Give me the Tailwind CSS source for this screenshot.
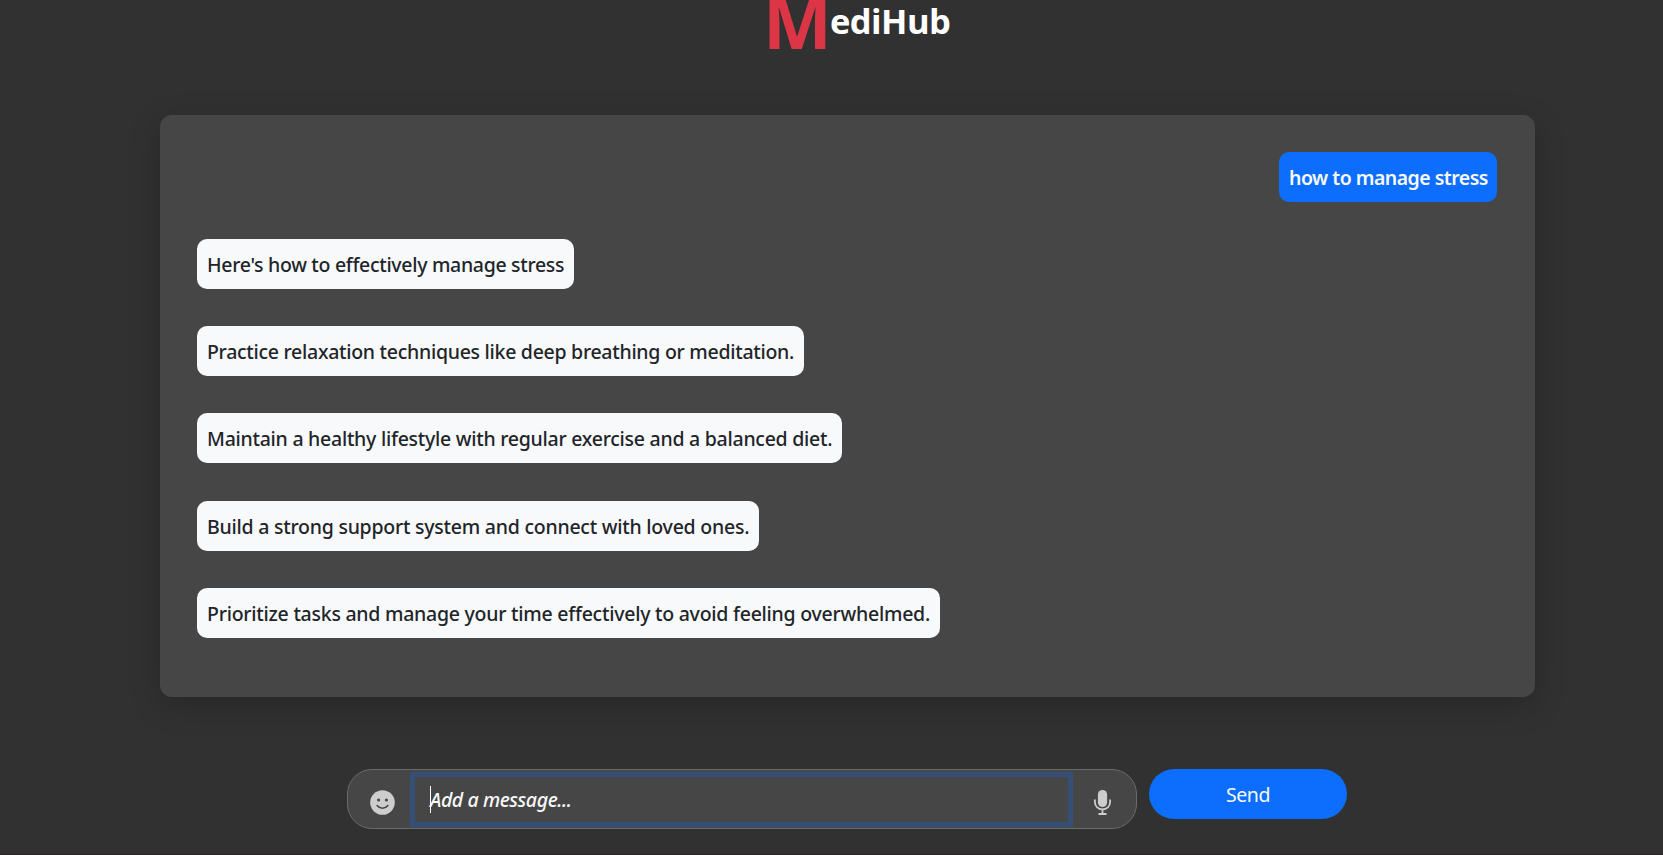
<!DOCTYPE html>
<html lang="en">
<head>
<meta charset="utf-8">
<title>MediHub</title>
<script src="https://cdn.jsdelivr.net/npm/@tailwindcss/browser@4"></script>
</head>
<body class="h-[855px] overflow-hidden bg-[#313131] font-['Noto_Sans',sans-serif] text-[19.5px] border-b border-[#2b2429] flex flex-col">
  <header class="flex h-10 shrink-0 pl-[763px] font-['Open_Sans',sans-serif] font-bold">
    <h1 class="flex whitespace-nowrap text-white">
      <span class="w-[67px] text-[73px] leading-[42px] text-[#dc3545]">M</span>
      <span class="text-[34.5px] leading-[42px] tracking-[-0.55px]">ediHub</span>
    </h1>
  </header>

  <main class="mt-[75px] ml-[160px] h-[582px] w-[1375px] shrink-0 rounded-xl bg-[#464646] px-[37px] pt-[37px] shadow-[0_8px_32px_rgba(0,0,0,0.2)] flex flex-col whitespace-nowrap leading-[52px] font-medium text-[#212529]">
    <p class="h-[50px] w-[218px] self-end mr-[1px] rounded-[10px] bg-[#0d6efd] pl-[10px] font-semibold tracking-[-0.52px] text-[#f8f9fa]">how to manage stress</p>
    <p class="mt-[37px] h-[50px] w-[377px] rounded-[10px] bg-[#f8f9fa] pl-[10px] tracking-[-0.31px]">Here's how to effectively manage stress</p>
    <p class="mt-[37px] h-[50px] w-[607px] rounded-[10px] bg-[#f8f9fa] pl-[10px] tracking-[-0.28px]">Practice relaxation techniques like deep breathing or meditation.</p>
    <p class="mt-[37px] h-[50px] w-[645px] rounded-[10px] bg-[#f8f9fa] pl-[10px] tracking-[-0.26px]">Maintain a healthy lifestyle with regular exercise and a balanced diet.</p>
    <p class="mt-[38px] h-[50px] w-[562px] rounded-[10px] bg-[#f8f9fa] pl-[10px] tracking-[-0.24px]">Build a strong support system and connect with loved ones.</p>
    <p class="mt-[37px] h-[50px] w-[743px] rounded-[10px] bg-[#f8f9fa] pl-[10px] tracking-[-0.25px]">Prioritize tasks and manage your time effectively to avoid feeling overwhelmed.</p>
  </main>

  <footer class="mt-[72px] ml-[347px] flex items-start gap-3">
    <div class="flex h-[60px] w-[790px] items-start rounded-[25px] border border-[#6b6b6b] bg-[#464646] pt-[2px]">
      <svg class="mt-[18px] ml-[22px] h-[25px] w-[25px]" viewBox="0 0 25 25" fill="none">
        <circle cx="12.5" cy="12.5" r="12.3" fill="#cdcdcd"/>
        <circle cx="8.6" cy="10" r="1.6" fill="#464646"/>
        <circle cx="16.4" cy="10" r="1.6" fill="#464646"/>
        <path d="M7.1 15.6c2.9 3.6 7.9 3.6 10.8 0" stroke="#464646" stroke-width="1.6" stroke-linecap="round"/>
      </svg>
      <div class="ml-[15px] flex h-[55px] w-[663px] items-center border-[5px] border-[#364f77] pl-[15px]">
        <span class="h-[27px] w-px bg-white"></span>
        <span class="-ml-px leading-[45px] font-medium italic tracking-[-0.42px] text-[#f8f9fa] whitespace-nowrap">Add a message...</span>
      </div>
      <svg class="mt-[18px] ml-[21px] h-[25px] w-[17px]" viewBox="0 0 17 25" fill="none">
        <rect x="3.9" y="0" width="9.2" height="17" rx="4.6" fill="#cdcdcd"/>
        <path d="M.9 9.5v2.6c0 4.4 3.4 7.3 7.6 7.3s7.6-2.9 7.6-7.3V9.5M8.5 19.4v4M4.5 24h8" stroke="#cdcdcd" stroke-width="1.8"/>
      </svg>
    </div>
    <button class="flex h-[50px] w-[198px] justify-center rounded-[25px] bg-[#0d6efd] leading-[51px] tracking-[-0.4px] text-[#f8f9fa]">Send</button>
  </footer>
</body>
</html>
